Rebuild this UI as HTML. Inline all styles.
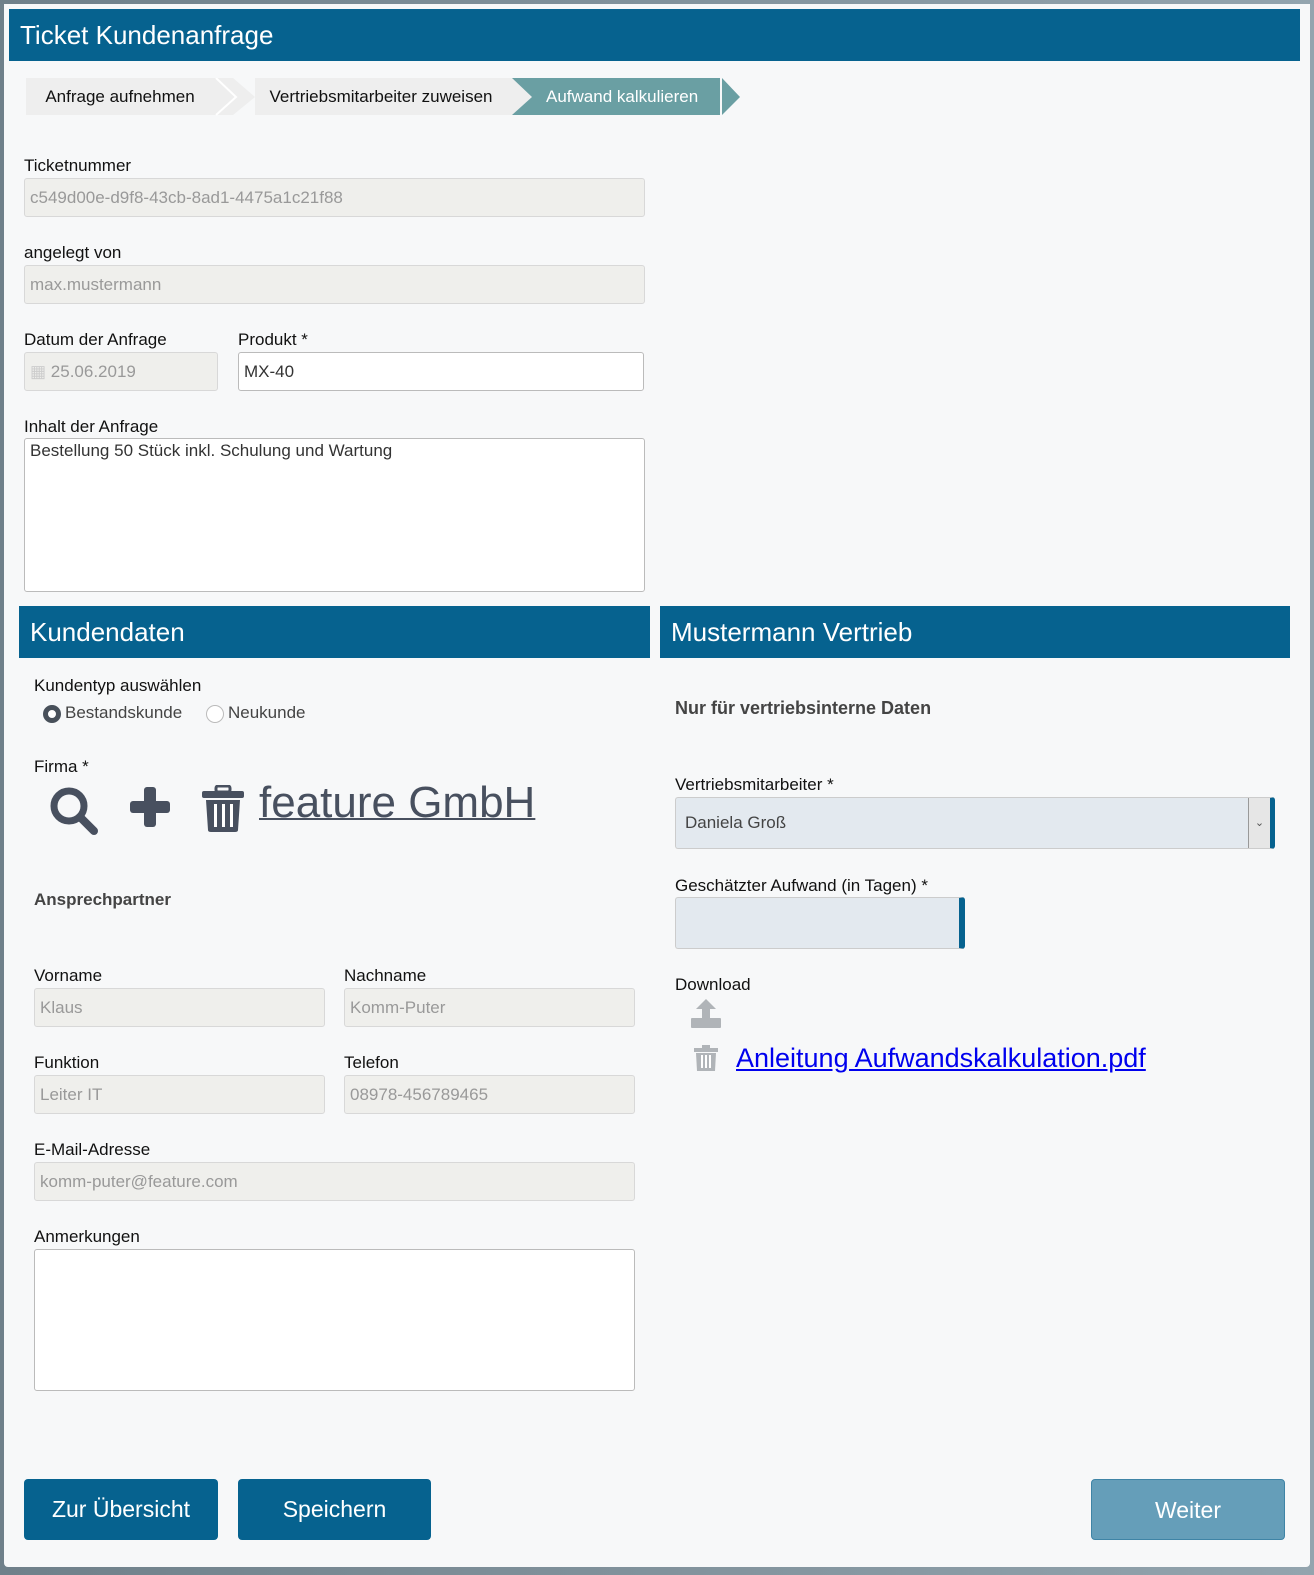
<!DOCTYPE html>
<html><head><meta charset="utf-8"><style>
*{box-sizing:border-box;margin:0;padding:0}
html,body{width:1314px;height:1575px;overflow:hidden}
body{background:linear-gradient(90deg,#6f808a,#93a4ae);font-family:"Liberation Sans",sans-serif;position:relative}
#p{position:absolute;left:4px;top:4px;width:1306px;height:1563px;background:#f7f8f9;border-radius:0 0 4px 4px}
.a{position:absolute}
.hd{background:#06628f;color:#fff;font-size:26px;font-weight:300;padding-left:11px;line-height:52px;height:52px}
.lb{font-size:17px;color:#111}
.in{border:1px solid #d8d8d8;background:#efefec;border-radius:3px;font-size:17px;color:#999;padding:0 5px;line-height:37px}
.wh{background:#fff;border:1px solid #bbb;color:#333}
.bt{background:#06628f;color:#fff;font-size:23px;text-align:center;line-height:61px;border-radius:4px}
.st{background:#eeeeee;font-size:17px;color:#111;line-height:37px;text-align:center}
</style></head><body>
<div id="p"></div>
<div class="a hd" style="left:9px;top:9px;width:1291px;">Ticket Kundenanfrage</div>

<div class="a st" style="left:26px;top:78px;width:188px">Anfrage aufnehmen</div>
<svg class="a" style="left:213px;top:78px" width="44" height="38"><polygon points="0,0 20,0 42,19 20,37 0,37" fill="#eee"/><polyline points="3,0 23,19 3,37" fill="none" stroke="#fff" stroke-width="2"/></svg>
<div class="a st" style="left:255px;top:78px;width:252px">Vertriebsmitarbeiter zuweisen</div>
<svg class="a" style="left:507px;top:78px" width="40" height="38"><polygon points="0,0 20,0 40,0 40,37 0,37 20,19" fill="#6a9fa3"/><polygon points="0,0 5,0 25,19 5,37 0,37" fill="#eee"/></svg>
<div class="a st" style="left:546px;top:78px;width:174px;background:#6a9fa3;color:#fff;text-align:left">Aufwand kalkulieren</div>
<svg class="a" style="left:719px;top:78px" width="24" height="38"><polygon points="3,0 21,19 3,37" fill="#6a9fa3"/></svg>

<div class="a lb" style="left:24px;top:156px">Ticketnummer</div>
<div class="a in" style="left:24px;top:178px;width:621px;height:39px">c549d00e-d9f8-43cb-8ad1-4475a1c21f88</div>
<div class="a lb" style="left:24px;top:243px">angelegt von</div>
<div class="a in" style="left:24px;top:265px;width:621px;height:39px">max.mustermann</div>
<div class="a lb" style="left:24px;top:330px">Datum der Anfrage</div>
<div class="a in" style="left:24px;top:352px;width:194px;height:39px"><span style="color:#ccc">&#9638;</span> 25.06.2019</div>
<div class="a lb" style="left:238px;top:330px">Produkt *</div>
<div class="a in wh" style="left:238px;top:352px;width:406px;height:39px">MX-40</div>
<div class="a lb" style="left:24px;top:417px">Inhalt der Anfrage</div>
<div class="a in wh" style="left:24px;top:438px;width:621px;height:154px;line-height:24px">Bestellung 50 Stück inkl. Schulung und Wartung</div>

<div class="a hd" style="left:19px;top:606px;width:631px;">Kundendaten</div>
<div class="a hd" style="left:660px;top:606px;width:630px;">Mustermann Vertrieb</div>

<div class="a lb" style="left:34px;top:676px">Kundentyp auswählen</div>
<div class="a" style="left:43px;top:705px;width:18px;height:18px;border-radius:50%;border:5px solid #48505a;background:#fff"></div>
<div class="a lb" style="left:65px;top:703px;color:#444">Bestandskunde</div>
<div class="a" style="left:206px;top:705px;width:18px;height:18px;border-radius:50%;border:1px solid #bbb;background:#fff"></div>
<div class="a lb" style="left:228px;top:703px;color:#444">Neukunde</div>

<div class="a lb" style="left:34px;top:757px">Firma *</div>
<svg class="a" style="left:48px;top:785px" width="54" height="52"><circle cx="21" cy="21" r="15" fill="none" stroke="#48505f" stroke-width="7"/><line x1="32" y1="32" x2="46" y2="46" stroke="#48505f" stroke-width="8" stroke-linecap="round"/></svg>
<svg class="a" style="left:128px;top:785px" width="44" height="44"><rect x="16" y="2" width="12" height="40" rx="3" fill="#48505f"/><rect x="2" y="16" width="40" height="12" rx="3" fill="#48505f"/></svg>
<svg class="a" style="left:201px;top:785px" width="44" height="48"><rect x="15" y="1" width="14" height="6" rx="2" fill="none" stroke="#48505f" stroke-width="3"/><rect x="1" y="6" width="42" height="7" rx="2" fill="#48505f"/><path d="M5 15h34l-2 30q0 2-3 2H10q-3 0-3-2z" fill="#48505f"/><rect x="13" y="19" width="3" height="23" fill="#fff"/><rect x="21" y="19" width="3" height="23" fill="#fff"/><rect x="29" y="19" width="3" height="23" fill="#fff"/></svg>
<div class="a" style="left:259px;top:778px;font-size:44px;color:#48505f;text-decoration:underline;text-decoration-thickness:2px">feature GmbH</div>

<div class="a lb" style="left:34px;top:890px;font-weight:bold;color:#444">Ansprechpartner</div>
<div class="a lb" style="left:34px;top:966px">Vorname</div>
<div class="a in" style="left:34px;top:988px;width:291px;height:39px">Klaus</div>
<div class="a lb" style="left:344px;top:966px">Nachname</div>
<div class="a in" style="left:344px;top:988px;width:291px;height:39px">Komm-Puter</div>
<div class="a lb" style="left:34px;top:1053px">Funktion</div>
<div class="a in" style="left:34px;top:1075px;width:291px;height:39px">Leiter IT</div>
<div class="a lb" style="left:344px;top:1053px">Telefon</div>
<div class="a in" style="left:344px;top:1075px;width:291px;height:39px">08978-456789465</div>
<div class="a lb" style="left:34px;top:1140px">E-Mail-Adresse</div>
<div class="a in" style="left:34px;top:1162px;width:601px;height:39px">komm-puter@feature.com</div>
<div class="a lb" style="left:34px;top:1227px">Anmerkungen</div>
<div class="a in wh" style="left:34px;top:1249px;width:601px;height:142px"></div>

<div class="a lb" style="left:675px;top:698px;font-weight:bold;color:#444;font-size:18px">Nur für vertriebsinterne Daten</div>
<div class="a lb" style="left:675px;top:775px">Vertriebsmitarbeiter *</div>
<div class="a" style="left:675px;top:797px;width:600px;height:52px;background:#e3e9ef;border:1px solid #ccc;border-right:5px solid #06628f;border-radius:3px;font-size:17px;color:#444;line-height:50px;padding-left:9px">Daniela Groß
<div class="a" style="right:0;top:0;width:22px;height:50px;background:#e6e6e6;border-left:1px solid #999;font-size:11px;text-align:center;color:#555">&#8964;</div></div>
<div class="a lb" style="left:675px;top:876px">Geschätzter Aufwand (in Tagen) *</div>
<div class="a" style="left:675px;top:897px;width:290px;height:52px;background:#e3e9ef;border:1px solid #ccc;border-right:6px solid #06628f;border-radius:3px"></div>
<div class="a lb" style="left:675px;top:975px">Download</div>
<svg class="a" style="left:690px;top:999px" width="32" height="30"><polygon points="16,0 6,10 12,10 12,20 20,20 20,10 26,10" fill="#b0b4b8"/><rect x="1" y="19" width="30" height="10" rx="1" fill="#b0b4b8"/></svg>
<svg class="a" style="left:694px;top:1045px" width="24" height="28"><rect x="8" y="0" width="8" height="4" fill="#b0b4b8"/><rect x="0" y="3" width="24" height="4" fill="#b0b4b8"/><path d="M2 8h20l-1 18H3z" fill="#b0b4b8"/><rect x="7" y="10" width="2" height="13" fill="#fff"/><rect x="11" y="10" width="2" height="13" fill="#fff"/><rect x="15" y="10" width="2" height="13" fill="#fff"/></svg>
<div class="a" style="left:736px;top:1043px;font-size:27px;color:#0000ee;text-decoration:underline">Anleitung Aufwandskalkulation.pdf</div>

<div class="a bt" style="left:24px;top:1479px;width:194px;height:61px">Zur Übersicht</div>
<div class="a bt" style="left:238px;top:1479px;width:193px;height:61px">Speichern</div>
<div class="a bt" style="left:1091px;top:1479px;width:194px;height:61px;background:#659eb9;border:1px solid #3f84a6">Weiter</div>
</body></html>
